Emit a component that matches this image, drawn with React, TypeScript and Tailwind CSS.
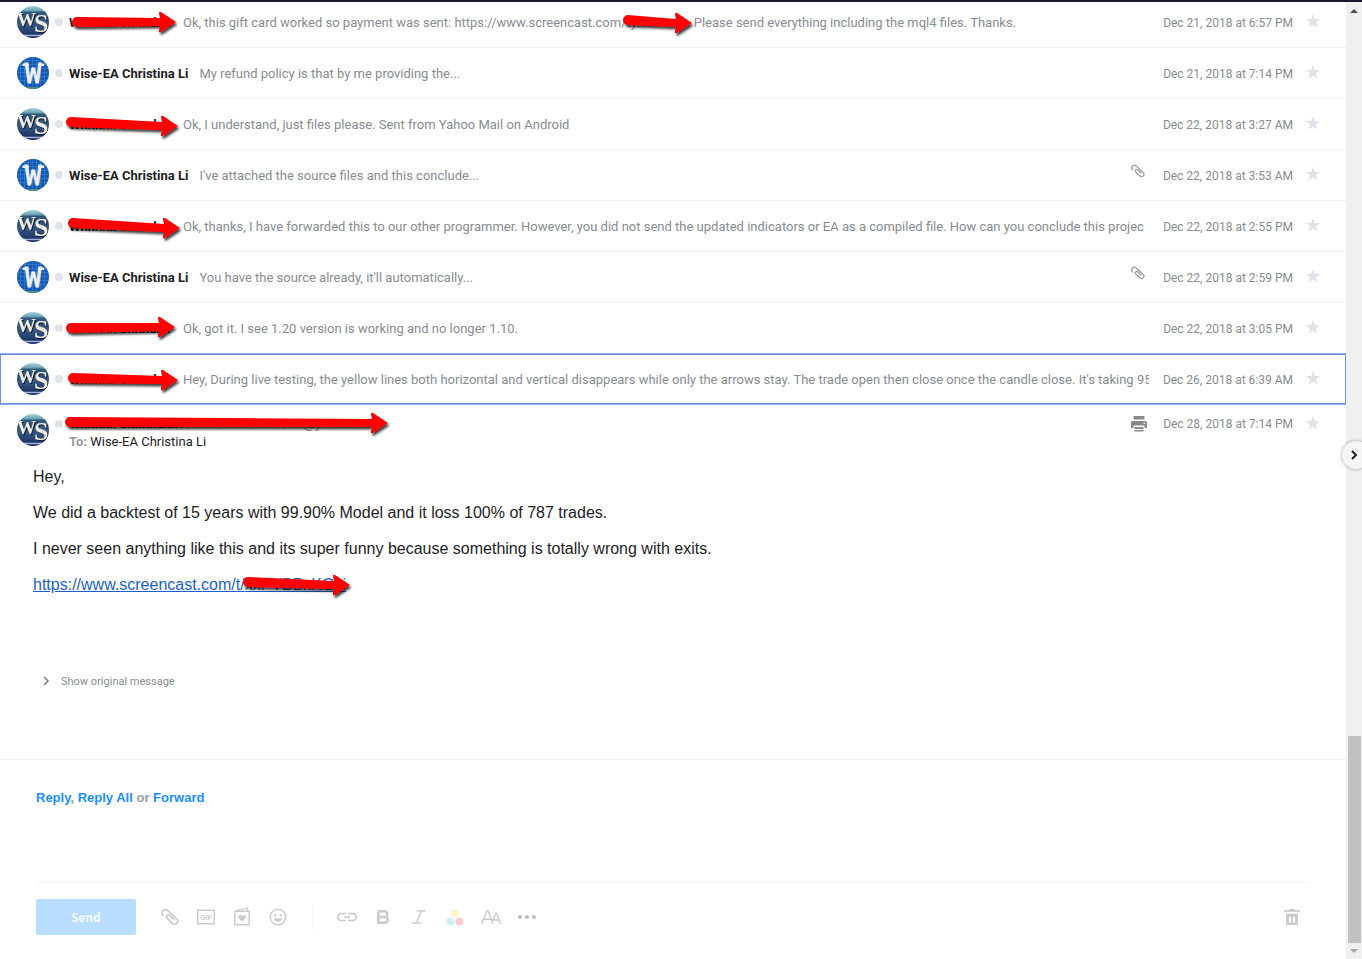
import { useId } from 'react';
import type { ReactNode } from 'react';

type Pointer = { x: number; width: number; from: number; to: number };

type Message = {
    sender: 'client' | 'wise';
    subject: ReactNode;
    date: string;
    attachment?: boolean;
    focused?: boolean;
    pointer?: Pointer;
};

// pointer positions: x is relative to the covered text, from / to are relative to its middle line
function RedArrow({ x, width, from, to }: Pointer) {
    const id = useId();
    const y1 = 20 + from;
    const y2 = 20 + to;
    const neck = width - 17;

    return (
        <svg
            aria-hidden="true"
            width={width + 8}
            height={40}
            className="pointer-events-none absolute top-1/2 z-10 -translate-y-1/2 overflow-visible"
            style={{ left: x }}
        >
            <defs>
                <filter id={id} x="-10%" y="-50%" width="120%" height="220%">
                    <feDropShadow dx="1.5" dy="2.5" stdDeviation="1.3" floodColor="#000" floodOpacity="0.75" />
                </filter>
            </defs>
            <path
                filter={`url(#${id})`}
                fill="#fe0000"
                d={`M5 ${y1 - 5} L${neck + 1} ${y2 - 4} L${neck} ${y2 - 9} Q${neck} ${y2 - 11} ${neck + 2} ${y2 - 10}
                    L${width} ${y2} L${neck + 2} ${y2 + 10} Q${neck - 1} ${y2 + 11} ${neck} ${y2 + 8}
                    L${neck + 1} ${y2 + 4} L5 ${y1 + 5} A5 5 0 0 1 5 ${y1 - 5} Z`}
            />
        </svg>
    );
}

function ClientAvatar() {
    const id = useId();

    return (
        <svg viewBox="0 0 32 32" className="size-8 shrink-0 rounded-full" aria-hidden="true">
            <defs>
                <linearGradient id={id} x1="0" y1="0" x2="0" y2="1">
                    <stop offset="0" stopColor="#a9d3dc" />
                    <stop offset="0.14" stopColor="#6fa3b4" />
                    <stop offset="0.2" stopColor="#2f5878" />
                    <stop offset="0.6" stopColor="#36557f" />
                    <stop offset="0.88" stopColor="#1d3567" />
                    <stop offset="0.92" stopColor="#a8b8d8" />
                    <stop offset="0.96" stopColor="#1b2d66" />
                </linearGradient>
            </defs>
            <rect width="32" height="32" fill={`url(#${id})`} />
            <text
                x="0"
                y="20"
                className="drop-shadow-[1px_1px_0_#0c1c3c]"
                fontFamily="'Liberation Serif', serif"
                fontWeight="700"
                fontSize="19"
                fill="#f0ece0"
            >
                W
                <tspan x="17" y="26" fontSize="26">S</tspan>
            </text>
        </svg>
    );
}

function WiseAvatar() {
    return (
        <svg viewBox="0 0 32 32" className="size-8 shrink-0 rounded-full" aria-hidden="true">
            <rect width="32" height="32" fill="#1459b4" />
            <path
                d="M0 3.5H32M0 7.5H32M0 11.5H32M0 15.5H32M0 19.5H32M0 23.5H32M3.5 0V32M7.5 0V32M11.5 0V32M15.5 0V32M19.5 0V32M23.5 0V32M27.5 0V32"
                stroke="#3f83cf"
                strokeWidth="0.6"
            />
            <path d="M0 30H32V32H0Z" fill="#4f8f7c" />
            <path d="M5.5 6.5H11.5V9H5.5ZM21 6.5H27V9H21Z" fill="#f1f1f1" />
            <text
                x="16.2"
                y="26"
                textAnchor="middle"
                fontFamily="'DejaVu Sans Mono', monospace"
                fontWeight="400"
                fontSize="27"
                fill="#f1f1f1"
                stroke="#f1f1f1"
                strokeWidth="0.8"
            >
                W
            </text>
        </svg>
    );
}

function Star() {
    return (
        <button type="button" aria-label="Star message" className="ml-3 flex h-[18px] w-4 shrink-0 self-center">
            <svg viewBox="0 0 16 16" className="size-4" fill="#dfe2e9">
                <path d="M8 0.8 9.9 5.9 15.2 6 11 9.3 12.5 14.4 8 11.5 3.5 14.4 5 9.3 0.8 6 6.1 5.9Z" />
            </svg>
        </button>
    );
}

function ClipIcon({ className }: { className: string }) {
    return (
        <svg viewBox="0 0 18 18" className={className} fill="none" stroke="currentColor" strokeWidth="1.7" strokeLinecap="round">
            <path d="M2.2 7.6C.6 6 .7 3.9 2 2.6 3.4 1.3 5.4 1.3 6.8 2.7L15.6 10.8C17 12.2 17 14 15.8 15.2 14.6 16.6 12.7 16.6 11.4 15.3L6.2 10.4C5.3 9.5 5.2 8.4 6 7.6 6.8 6.7 8 6.7 8.9 7.6L12.8 11.4" />
        </svg>
    );
}

function HiddenName() {
    return <span className="block w-[103px] whitespace-nowrap">Wnnnnx Snnndnx</span>;
}

const messages: Message[] = [
    {
        sender: 'client',
        subject: (
            <>
                Ok, this gift card worked so payment was sent: https://www.screencast.com/
                <span className="relative inline-block w-16">
                    tyxxxxxxp
                    <RedArrow x={-4} width={69} from={-3} to={0} />
                </span>{' '}
                Please send everything including the mql4 files. Thanks.
            </>
        ),
        date: 'Dec 21, 2018 at 6:57 PM',
        pointer: { x: 3, width: 104, from: 0, to: 0 },
    },
    {
        sender: 'wise',
        subject: 'My refund policy is that by me providing the...',
        date: 'Dec 21, 2018 at 7:14 PM',
    },
    {
        sender: 'client',
        subject: 'Ok, I understand, just files please. Sent from Yahoo Mail on Android',
        date: 'Dec 22, 2018 at 3:27 AM',
        pointer: { x: -3, width: 112, from: -2, to: 2 },
    },
    {
        sender: 'wise',
        subject: "I've attached the source files and this conclude...",
        date: 'Dec 22, 2018 at 3:53 AM',
        attachment: true,
    },
    {
        sender: 'client',
        subject:
            'Ok, thanks, I have forwarded this to our other programmer. However, you did not send the updated indicators or EA as a compiled file. How can you conclude this projec',
        date: 'Dec 22, 2018 at 2:55 PM',
        pointer: { x: -1, width: 112, from: -3, to: 2 },
    },
    {
        sender: 'wise',
        subject: "You have the source already, it'll automatically...",
        date: 'Dec 22, 2018 at 2:59 PM',
        attachment: true,
    },
    {
        sender: 'client',
        subject: 'Ok, got it. I see 1.20 version is working and no longer 1.10.',
        date: 'Dec 22, 2018 at 3:05 PM',
        pointer: { x: -3, width: 109, from: 0, to: -1 },
    },
    {
        sender: 'client',
        subject:
            "Hey, During live testing, the yellow lines both horizontal and vertical disappears while only the arrows stay. The trade open then close once the candle close. It's taking 95",
        date: 'Dec 26, 2018 at 6:39 AM',
        focused: true,
        pointer: { x: -1, width: 110, from: -1, to: 1 },
    },
];

function MessageRow({ message }: { message: Message }) {
    const { sender, subject, date, attachment, focused, pointer } = message;

    return (
        <li
            className={
                focused
                    ? 'relative flex h-[51px] items-center border-b border-[#8eaeea] pr-[25px] pl-[17px] shadow-[inset_0_0_0_1px_#6b92d8,0_-1px_0_#8eaeea]'
                    : 'flex h-[51px] items-center border-b border-[#f0f0f2] pr-[25px] pl-[17px]'
            }
        >
            {sender === 'client' ? <ClientAvatar /> : <WiseAvatar />}
            <span className="ml-1.5 size-2 shrink-0 rounded-full bg-[#e0e2e9]" />
            <div className="relative ml-1.5 shrink-0 pt-0.5 font-bold text-[#1d1d1f]">
                {sender === 'client' ? <HiddenName /> : 'Wise-EA Christina Li'}
                {pointer && <RedArrow {...pointer} />}
            </div>
            <p className="ml-[11px] min-w-0 flex-1 overflow-x-clip pt-0.5 whitespace-nowrap text-[#878c91]">{subject}</p>
            {attachment && <ClipIcon className="mr-1 mb-2 ml-4 size-3.5 shrink-0 text-[#9a9da4]" />}
            <time className="ml-3.5 shrink-0 pt-0.5 text-xs text-[#878c91]">{date}</time>
            <Star />
        </li>
    );
}

function OpenMessage() {
    return (
        <article>
            <header className="flex pt-2.5 pr-[25px] pl-[17px]">
                <div className="-mt-px flex">
                    <ClientAvatar />
                </div>
                <span className="mt-[5px] ml-1.5 size-2 shrink-0 rounded-full bg-[#e0e2e9]" />
                <div className="ml-1.5 flex-1 leading-[18px]">
                    <div className="relative w-[310px] overflow-visible whitespace-nowrap">
                        <b className="text-[#1d1d1f]">Wnnnnx Snnnndnx</b>{' '}
                        <span className="text-[#878c91]">xxxxxxxxxxxxxxxxxxx@yxxxxxxx</span>
                        <RedArrow x={-4} width={323} from={-2} to={-1} />
                    </div>
                    <div className="text-[#1d1d1f]">
                        <b className="text-[#989ba5]">To:</b> Wise-EA Christina Li
                    </div>
                </div>
                <button type="button" aria-label="Print" className="mt-px h-4 text-[#87898d]">
                    <svg viewBox="0 0 16 16" className="size-4" fill="currentColor">
                        <path d="M2.5 0H13.5V3.5H2.5ZM1.5 5H14.5Q16 5 16 6.5V12H13.5V9.5H2.5V12H0V6.5Q0 5 1.5 5ZM12.5 6.5V7.7H14V6.5ZM3.5 11H12.5V13H3.5ZM3.5 14H12.5V15.5H3.5Z" />
                    </svg>
                </button>
                <div className="ml-4 flex h-[18px] items-center">
                    <time className="text-xs text-[#878c91]">Dec 28, 2018 at 7:14 PM</time>
                    <Star />
                </div>
            </header>

            <div className="space-y-[18px] px-[33px] pt-[17px] font-['Liberation_Sans',Arial,sans-serif] text-base leading-[18px] text-[#1d1d1f]">
                <p>Hey,</p>
                <p>We did a backtest of 15 years with 99.90% Model and it loss 100% of 787 trades.</p>
                <p>I never seen anything like this and its super funny because something is totally wrong with exits.</p>
                <p>
                    <a href="#link" className="text-[#1a62c8] underline">
                        https://www.screencast.com/t/
                        <span className="relative">
                            xxPYBBxKGxi
                            <RedArrow x={-2} width={107} from={-3} to={0} />
                        </span>
                    </a>
                </p>
            </div>

            <button type="button" className="mt-[78px] ml-10 flex h-5 items-center text-[11px] text-[#878c91]">
                <svg viewBox="0 0 12 12" className="mb-0.5 size-3" fill="none" stroke="#7d828a" strokeWidth="1.6">
                    <path d="M4 2 8 6 4 10" />
                </svg>
                <span className="ml-[9px]">Show original message</span>
            </button>
        </article>
    );
}

function ToolButton({ label, children }: { label: string; children: ReactNode }) {
    return (
        <button type="button" aria-label={label} className="flex size-5 items-center justify-center">
            {children}
        </button>
    );
}

function Composer() {
    return (
        <section className="mt-[67px] border-t border-[#f0f0f2] px-9">
            <p className="mt-7 font-['Liberation_Sans',Arial,sans-serif] text-[13px] leading-5 font-bold text-[#989ba5]">
                <a href="#reply" className="text-[#188fff]">Reply</a>,{' '}
                <a href="#reply-all" className="text-[#188fff]">Reply All</a> or{' '}
                <a href="#forward" className="text-[#188fff]">Forward</a>
            </p>

            <div className="mt-[74px] flex items-center border-t border-[#f5f5f6] pt-4 text-[#cbcbcc]">
                <button
                    type="button"
                    className="h-9 w-[100px] rounded-xs bg-[#b9ddff] pt-0.5 font-['Noto_Sans',sans-serif] text-xs font-bold text-white/80"
                >
                    Send
                </button>

                <div className="ml-6 flex gap-4">
                    <ToolButton label="Attach files">
                        <ClipIcon className="size-[18px]" />
                    </ToolButton>
                    <ToolButton label="Insert GIF">
                        <svg viewBox="0 0 18 16" className="h-4 w-[18px]">
                            <rect x="0.75" y="1.25" width="16.5" height="13.5" fill="none" stroke="currentColor" strokeWidth="1.5" />
                            <text x="9" y="10.6" textAnchor="middle" fontFamily="'Liberation Sans', sans-serif" fontWeight="700" fontSize="7" fill="currentColor">
                                GIF
                            </text>
                        </svg>
                    </ToolButton>
                    <ToolButton label="Insert card">
                        <svg viewBox="0 0 18 20" className="h-5 w-[18px]" fill="none" stroke="currentColor">
                            <rect x="1.75" y="4.25" width="14.5" height="13.5" strokeWidth="1.5" />
                            <path d="M3 3.7 14.5 1.2V4" strokeWidth="1.2" />
                            <path d="M9 14.5 5.4 11C4.3 9 6.8 6.8 9 9 11.2 6.8 13.7 9 12.6 11Z" fill="currentColor" stroke="none" />
                        </svg>
                    </ToolButton>
                    <ToolButton label="Insert emoji">
                        <svg viewBox="0 0 18 18" className="size-[18px]">
                            <circle cx="9" cy="9" r="7.8" fill="none" stroke="currentColor" strokeWidth="1.5" />
                            <circle cx="6.2" cy="7.2" r="1.2" fill="currentColor" />
                            <circle cx="11.8" cy="7.2" r="1.2" fill="currentColor" />
                            <path d="M5 10.2H13C13 12.2 11.3 13.8 9 13.8S5 12.2 5 10.2Z" fill="currentColor" />
                        </svg>
                    </ToolButton>
                </div>

                <span className="ml-6 h-6 w-px bg-[#f3f3f4]" />

                <div className="ml-6 flex gap-4">
                    <ToolButton label="Insert link">
                        <svg viewBox="0 0 20 10" className="h-2.5 w-5" fill="none" stroke="currentColor" strokeWidth="1.7">
                            <path d="M9 1.5H4A3 3.3 0 0 0 4 8.5H9M11 1.5H16A3 3.3 0 0 1 16 8.5H11M7 5H13" />
                        </svg>
                    </ToolButton>
                    <ToolButton label="Bold">
                        <svg viewBox="0 0 14 16" className="h-4 w-3.5" fill="none" stroke="currentColor" strokeWidth="2.6">
                            <path d="M2.3 2.3H8.5A2.6 2.6 0 0 1 8.5 8H2.3M8.5 8H9A2.8 2.8 0 0 1 9 13.7H2.3V2.3" />
                        </svg>
                    </ToolButton>
                    <ToolButton label="Italic">
                        <svg viewBox="0 0 14 14" className="size-3.5" fill="none" stroke="currentColor" strokeWidth="1.5">
                            <path d="M4.5 1H14M0 13H9.5M9.3 1 4.7 13" />
                        </svg>
                    </ToolButton>
                    <ToolButton label="Text colour">
                        <svg viewBox="0 0 18 17" className="h-[17px] w-[18px]">
                            <circle cx="8.7" cy="4.5" r="4.1" fill="#fff2cc" />
                            <circle cx="4.5" cy="12.5" r="4.1" fill="#ccf3ee" />
                            <circle cx="13.5" cy="12.5" r="4.1" fill="#ffced2" />
                        </svg>
                    </ToolButton>
                    <ToolButton label="Font size">
                        <svg viewBox="0 0 20 14" className="h-3.5 w-5" fill="none" stroke="currentColor" strokeWidth="1.4">
                            <path d="M0.7 14 6 .8H7L12 14M2.6 9.3H10.2M11 12 14.8 3.5H15.8L19.3 14M12.6 10H18" />
                        </svg>
                    </ToolButton>
                    <ToolButton label="More options">
                        <svg viewBox="0 0 18 4" className="h-1 w-[18px]" fill="#bdbdbf">
                            <circle cx="2" cy="2" r="2" />
                            <circle cx="9" cy="2" r="2" />
                            <circle cx="16" cy="2" r="2" />
                        </svg>
                    </ToolButton>
                </div>

                <button type="button" aria-label="Delete draft" className="mr-[10px] ml-auto">
                    <svg viewBox="0 0 16 16" className="size-4" fill="currentColor">
                        <path d="M5.5 0H10.5V1H16V2.8H0V1H5.5ZM2 4.7H14V16H2ZM5 7.5V13.5H7V7.5ZM9 7.5V13.5H11V7.5Z" fillRule="evenodd" />
                    </svg>
                </button>
            </div>
        </section>
    );
}

function ScrollTrack() {
    return (
        <div className="flex w-4 shrink-0 flex-col items-center bg-[#f0f0f0]" aria-hidden="true">
            <svg viewBox="0 0 8 4" className="mt-[7px] h-1 w-2" fill="#505050">
                <path d="M0 4 4 0 8 4Z" />
            </svg>
            <div className="flex-1" />
            <div className="ml-px h-[207px] w-[13px] bg-[#c1c1c1]" />
            <svg viewBox="0 0 8 4" className="my-1.5 h-1 w-2" fill="#a3a3a3">
                <path d="M0 0 4 4 8 0Z" />
            </svg>
        </div>
    );
}

export default function App() {
    return (
        <div className="relative flex h-screen flex-col overflow-hidden bg-white font-[Roboto,sans-serif] text-[13px]">
            <div className="h-0.5 shrink-0 bg-[#1b1530]" />
            <div className="flex min-h-0 flex-1">
                <main className="min-w-0 flex-1 overflow-hidden">
                    <ul className="-mt-[5px]">
                        {messages.map((message) => (
                            <MessageRow key={message.date} message={message} />
                        ))}
                    </ul>
                    <OpenMessage />
                    <Composer />
                </main>
                <ScrollTrack />
            </div>

            <button
                type="button"
                aria-label="Expand side panel"
                className="absolute top-[441px] -right-2 flex size-7 items-center justify-center rounded-full bg-[#f5f5f5] shadow-[0_0_3px_1px_#00000038]"
            >
                <svg viewBox="0 0 12 12" className="mr-1 size-3" fill="none" stroke="#1d1d1f" strokeWidth="2">
                    <path d="M4 2 8 6 4 10" />
                </svg>
            </button>
        </div>
    );
}
